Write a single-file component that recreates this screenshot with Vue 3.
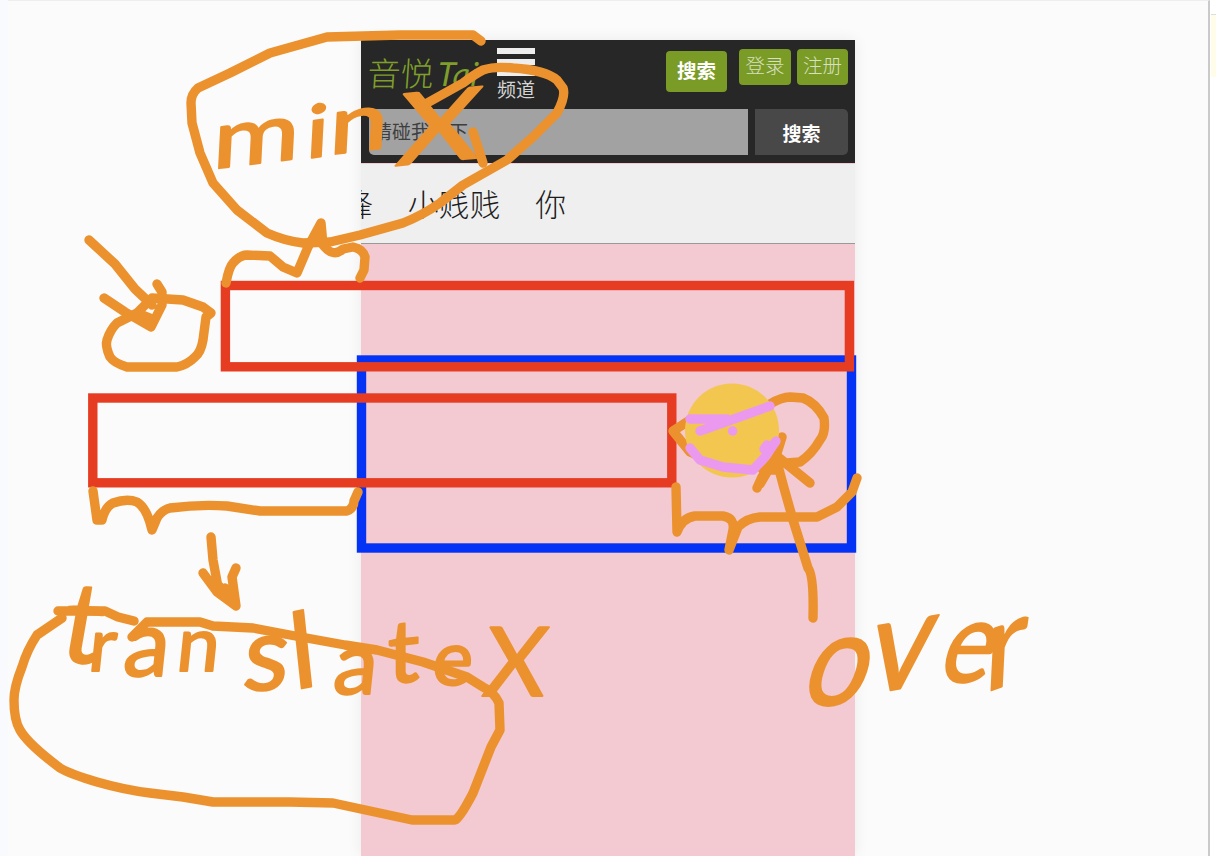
<script setup>
const buttons = ['登录', '注册']
const tabs = ['锋', '小贱贱', '你']
const strokes = [
  // upper loop
  'M481 41 L473 35 H400 L327 37 L270 53 L230 73 L198 88 Q191 94 191 103 L192 123 L200 153 L213 183 L237 210 L267 233 Q285 241 303 243 L330 242 L360 235 L403 223 Q423 215 440 203 L463 185 L507 160 L533 137 L557 113 Q566 96 563 88 L557 80 Q545 70 513 68 Q495 66 483 70 Q475 74 463 83 L420 107',
  'M483 163 L473 132',
  // brace above the first track
  'M226 283 Q229 267 233 263 Q240 255 247 255 L270 256 L283 267 L297 273 L308 247 L321 223 L323 245 Q333 258 343 249 L353 247 Q363 249 365 257 L364 270 L360 278 M320 226 L313 240',
  // pointer and small loop
  'M89 240 L115 264 L135 289 L152 305 M104 298 L125 312 L151 327 L162 305 V292 L157 284 M140 314 L150 318',
  'M152 298 L183 300 L203 307 L211 313 L206 317 L203 340 Q201 352 195 357 Q187 365 177 367 H127 Q114 363 110 357 Q105 346 107 340 Q110 330 117 323 L137 313 L152 298',
  // brace below the second track
  'M93 491 L97 520 H102 Q105 507 113 503 Q127 498 137 502 Q147 508 152 530 L157 518 Q162 510 170 508 Q200 504 227 506 L260 511 H347 Q354 508 354 501 L358 492',
  // arrow down
  'M211 537 L213 560 L218 587 M203 573 L217 592 L236 606 L232 577 L236 568 M218 585 L232 600 L225 588',
  // lower loop
  'M58 611 H105 L118 617 L134 621 M62 618 L37 635 Q27 650 22 667 Q14 687 14 700 Q14 720 20 730 Q28 744 60 768 Q70 774 97 782 Q125 790 150 793 L183 797 L213 802 H290 L333 803 L412 820 H455 Q460 818 473 793 L491 747 L500 730 L499 703 Q494 692 483 687 L467 677 L423 662 L377 650 L345 645 L290 635 L253 628 L213 626 L200 622 H147 L132 637',
  // strokes round the ball
  'M690 420 L673 431 L690 452 L720 465 M770 404 Q782 397 790 397 L803 398 Q816 403 824 418 Q826 433 820 440 Q812 454 800 462 L787 463 M782 437 L777 453 L763 470',
  'M757 488 L762 477 L778 457 L810 483 M763 470 H775 M760 484 L770 467 M777 462 L784 488 L793 520 L808 568 Q814 575 813 618',
  // brace right of the second track
  'M676 487 L677 532 Q682 518 695 516 H723 Q735 518 733 530 L729 550 L738 527 Q747 518 760 517 H817 L837 507 L852 492 L857 478',
]
</script>

<template>
  <main class="board">
    <section class="sheet">
      <div class="phone">
        <header class="top">
          <div class="bar">
            <span class="logo">音悦<i>Tai</i></span>
            <div class="menu"><b></b><b></b><b></b><span>频道</span></div>
            <button class="green strong">搜索</button>
            <button v-for="b in buttons" :key="b" class="green">{{ b }}</button>
          </div>
          <div class="search">
            <div class="field">请碰我一下</div>
            <button class="go">搜索</button>
          </div>
        </header>
        <nav class="tabs"><span v-for="t in tabs" :key="t">{{ t }}</span></nav>
      </div>
    </section>
    <aside class="side"><div class="note"></div></aside>

    <svg class="ink" width="1216" height="856" viewBox="0 0 1216 856">
      <g fill="none" stroke-width="9.4">
        <rect x="361.5" y="360" width="490" height="188" stroke="#0533f5" />
        <rect x="225.4" y="285.5" width="624" height="81.3" stroke="#e63c22" />
        <rect x="92.8" y="398" width="579" height="84.8" stroke="#e63c22" />
      </g>
      <g class="pen"><path v-for="d in strokes" :key="d" :d="d" /></g>
      <g class="hand">
        <text transform="translate(212 169) rotate(-7) skewX(-10) scale(1.32 1)"><tspan x="0" y="0" font-size="80">m</tspan><tspan x="71" y="1" font-size="72">i</tspan><tspan x="89" y="0" font-size="80">n</tspan><tspan x="140" y="19" rotate="2" font-size="98">X</tspan></text>
        <text transform="translate(0 690) skewX(-6)"><tspan x="54" y="-29" rotate="4" font-size="112">t</tspan><tspan x="85" y="-19" font-size="74">r</tspan><tspan x="120" y="-14" font-size="92">a</tspan><tspan x="173" y="-19" font-size="76">n</tspan><tspan x="241" y="0" font-size="104">s</tspan><tspan x="294" y="0" rotate="-12" font-size="106">l</tspan><tspan x="332" y="4" font-size="88">a</tspan><tspan x="387" y="-6" rotate="-6" font-size="88">t</tspan><tspan x="430" y="-5" font-size="76">e</tspan><tspan x="482" y="6" font-size="96">X</tspan></text>
        <text transform="translate(805 703) skewX(-18) scale(.85 1)"><tspan x="-8" y="2" font-size="130">o</tspan><tspan x="66" y="-8" rotate="-9" font-size="138">v</tspan><tspan x="145" y="-21" font-size="114">e</tspan><tspan x="206" y="-10" rotate="-18" font-size="128">r</tspan></text>
      </g>
      <circle cx="732" cy="430.5" r="47" fill="#f3c64f" />
      <g class="pen violet">
        <path d="M690 419 H727 M700 431 L717 425 L770 406 M690 448 L700 460 L723 467 L753 470 L765 457 L776 441 M767 445 L764 449" />
        <path d="M732.5 431 h.2" />
      </g>
    </svg>
  </main>
</template>

<style>
body { background: #f8fafd; overflow: hidden; }
</style>
<style scoped>
.board { position: relative; display: flex; width: 1216px; height: 856px; padding-left: 8px; box-sizing: border-box; overflow: hidden; font-family: "Liberation Sans", "Noto Sans CJK SC", sans-serif; }
.sheet { width: 1202px; box-sizing: border-box; padding: 39px 0 0 353px; background: #fbfbfb; border-top: 1px solid #eee; border-right: 2px solid #cacaca; }
.phone { width: 494px; height: 816px; background: #f3c9d2; box-shadow: 0 0 14px rgba(0, 0, 0, .07); overflow: hidden; }
.top { height: 123px; background: #272727; margin-bottom: 1px; }
.bar { display: flex; height: 69px; align-items: flex-start; }
.logo { width: 127px; padding: 9px 0 0 7px; box-sizing: border-box; font-size: 33px; line-height: 48px; font-weight: 300; color: #7f9e2b; white-space: nowrap; transform: skewX(-4deg); }
.logo i { margin-left: 4px; font-family: Lato, sans-serif; font-weight: 400; letter-spacing: 1px; }
.menu { width: 39px; margin: 8px 131px 0 9px; color: #d4d4d4; }
.menu b { display: block; width: 38px; height: 6px; margin-bottom: 5px; background: #eee; }
.menu span { display: block; font-size: 19px; line-height: 22px; margin-top: -1px; white-space: nowrap; }
button { font-family: inherit; border: 0; padding: 0; }
.green { width: 52px; height: 36px; margin: 9px 0 0 6px; border-radius: 4px; background: #7a9b25; color: #d8e0c2; font-size: 19.5px; line-height: 32px; font-weight: 300; padding-bottom: 3px; }
.green.strong { width: 61px; height: 41px; margin: 11px 6px 0 -1px; color: #fff; font-weight: 700; padding-bottom: 1px; flex: none; }
.green:last-child { width: 51px; }
.search { display: flex; gap: 7px; padding-left: 8px; }
.field { width: 379px; height: 46px; box-sizing: border-box; border-radius: 5px 0 0 5px; background: #a2a2a2; color: #3e3e3e; font-size: 19px; line-height: 48px; padding-left: 4px; }
.go { width: 93px; height: 46px; border-radius: 0 5px 5px 0; background: #484848; color: #fff; font-size: 19px; font-weight: 700; }
.tabs { display: flex; gap: 35px; height: 79px; background: #efefef; border-bottom: 1px solid #999; font-size: 30.8px; line-height: 83px; font-weight: 300; color: #1c1c1c; white-space: nowrap; }
.tabs span:first-child { margin-left: -19px; }
.side { width: 6px; background: #fff; padding: 14px 0 0 1px; box-sizing: border-box; }
.note { height: 62px; border-top: 1px solid #ddd; background: #fffce8; }
.ink { position: absolute; left: 0; top: 0; }
.pen { fill: none; stroke: #eb922f; stroke-width: 9.4; stroke-linecap: round; stroke-linejoin: round; }
.violet { stroke: #eb99ef; }
.hand { font-family: Lato, "Liberation Sans", sans-serif; fill: #eb922f; stroke: #eb922f; stroke-width: 2; stroke-linejoin: round; }
</style>
